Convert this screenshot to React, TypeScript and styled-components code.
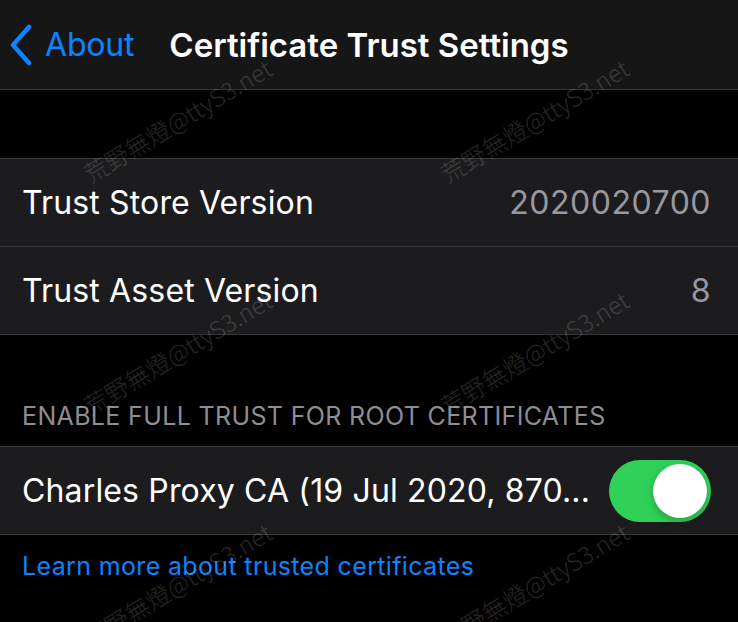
import React from "react";
import styled, { createGlobalStyle } from "styled-components";

const GlobalStyle = createGlobalStyle`
  html, body {
    margin: 0;
    padding: 0;
    background: #000;
  }
  body {
    font-family: Inter, "Noto Sans", "Liberation Sans", sans-serif;
    -webkit-font-smoothing: antialiased;
  }
`;

const Screen = styled.div`
  position: relative;
  width: 738px;
  height: 622px;
  overflow: hidden;
  background: #000;
  color: #fff;
`;

const NavBar = styled.div`
  display: grid;
  grid-template-columns: 1fr auto 1fr;
  align-items: center;
  height: 89px;
  background: #161616;
  border-bottom: 1px solid #343434;
`;

const BackButton = styled.div`
  display: flex;
  align-items: center;
  gap: 12px;
  padding-left: 9px;
  color: #0a84ff;
  font-size: 32px;
  letter-spacing: -0.2px;
`;

const Title = styled.div`
  font-size: 33px;
  font-weight: 600;
  letter-spacing: 0;
`;

const Spacer = styled.div<{ $h: number }>`
  height: ${(p) => p.$h}px;
`;

const Group = styled.div`
  background: #1c1c1e;
  border-top: 1px solid #38383a;
  border-bottom: 1px solid #38383a;
`;

const Row = styled.div`
  display: flex;
  align-items: center;
  justify-content: space-between;
  gap: 20px;
  height: 87px;
  padding: 0 27px 0 22px;
  font-size: 32px;
  letter-spacing: 0.15px;
  & + & {
    border-top: 1px solid #38383a;
  }
`;

const Label = styled.span`
  white-space: nowrap;
  overflow: hidden;
`;

const Value = styled.span`
  color: #98989e;
  letter-spacing: 0.5px;
`;

const SectionHeader = styled.div`
  height: 111px;
  display: flex;
  align-items: flex-end;
  padding: 0 0 15px 22px;
  box-sizing: border-box;
  color: #8d8d93;
  font-size: 25px;
  letter-spacing: 0.35px;
`;

const FooterLink = styled.div`
  padding: 16px 0 0 22px;
  color: #0a84ff;
  font-size: 25px;
  letter-spacing: 0.35px;
`;

const Toggle = styled.div<{ $on: boolean }>`
  flex: none;
  position: relative;
  width: 102px;
  height: 62px;
  border-radius: 31px;
  background: ${(p) => (p.$on ? "#30d158" : "#39393d")};
  &::after {
    content: "";
    position: absolute;
    top: 4px;
    left: ${(p) => (p.$on ? "44px" : "4px")};
    width: 54px;
    height: 54px;
    border-radius: 50%;
    background: #fff;
    box-shadow: 0 3px 8px rgba(0, 0, 0, 0.25);
  }
`;

const WatermarkLayer = styled.div`
  position: absolute;
  inset: 0;
  pointer-events: none;
`;

const Watermark = styled.span<{ $x: number; $y: number }>`
  position: absolute;
  left: ${(p) => p.$x}px;
  top: ${(p) => p.$y}px;
  transform: translate(-50%, -50%) rotate(-31deg);
  white-space: nowrap;
  font-family: "Noto Sans CJK TC", "Noto Sans CJK SC", sans-serif;
  font-weight: 300;
  font-size: 24px;
  color: rgba(255, 255, 255, 0.17);
`;

const Chevron = () => (
  <svg width="24" height="42" viewBox="0 0 24 42">
    <path
      d="M20 3 L4 21 L20 39"
      fill="none"
      stroke="#0a84ff"
      strokeWidth="4.5"
      strokeLinecap="round"
      strokeLinejoin="round"
    />
  </svg>
);

const marks = [
  [177, 120],
  [534, 120],
  [177, 352],
  [534, 352],
  [177, 584],
  [534, 584],
];

export default function App() {
  return (
    <>
      <GlobalStyle />
      <Screen>
        <NavBar>
          <BackButton>
            <Chevron />
            About
          </BackButton>
          <Title>Certificate Trust Settings</Title>
          <div />
        </NavBar>
        <Spacer $h={68} />
        <Group>
          <Row>
            <Label>Trust Store Version</Label>
            <Value>2020020700</Value>
          </Row>
          <Row>
            <Label>Trust Asset Version</Label>
            <Value>8</Value>
          </Row>
        </Group>
        <SectionHeader>ENABLE FULL TRUST FOR ROOT CERTIFICATES</SectionHeader>
        <Group>
          <Row>
            <Label>Charles Proxy CA (19 Jul 2020, 870...</Label>
            <Toggle $on />
          </Row>
        </Group>
        <FooterLink>Learn more about trusted certificates</FooterLink>
        <WatermarkLayer>
          {marks.map(([x, y], i) => (
            <Watermark key={i} $x={x} $y={y}>
              荒野無燈@ttyS3.net
            </Watermark>
          ))}
        </WatermarkLayer>
      </Screen>
    </>
  );
}
